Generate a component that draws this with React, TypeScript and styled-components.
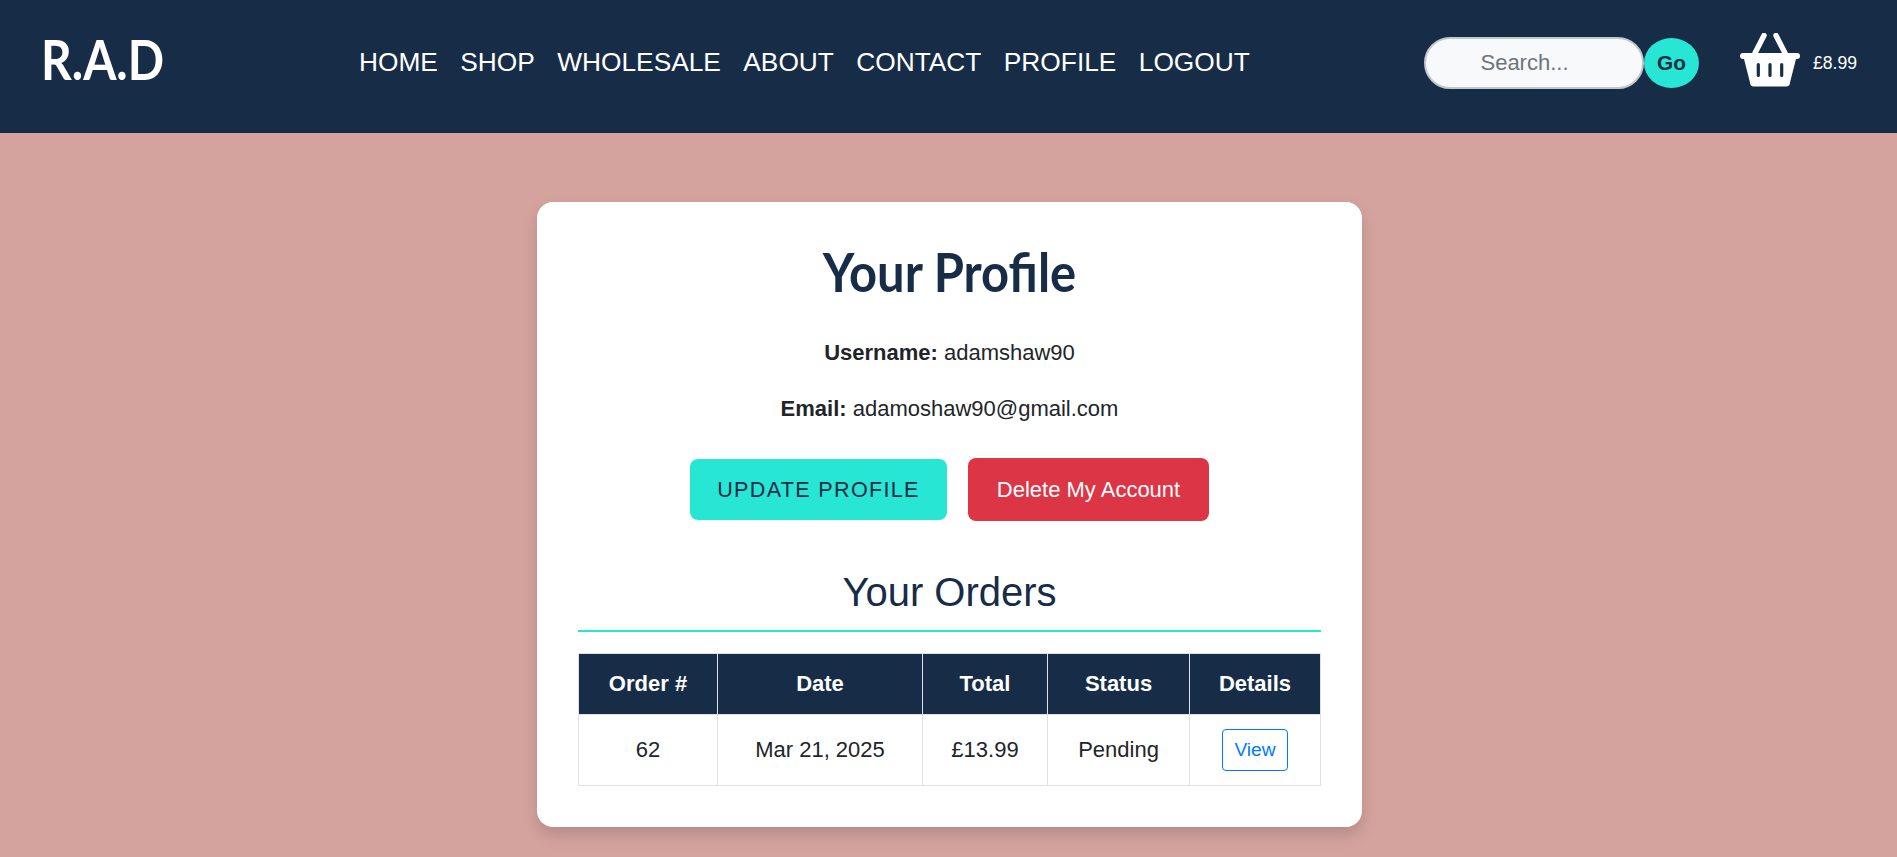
import React, { FC } from "react";
import styled, { createGlobalStyle } from "styled-components";

const navy = "#172c47";
const teal = "#27e6d4";

const GlobalStyle = createGlobalStyle`
  * {
    box-sizing: border-box;
  }

  body {
    margin: 0;
    min-height: 857px;
    background: #d5a39e;
    font-family: "Liberation Sans", Arial, sans-serif;
    color: #212529;
  }
`;

const Header = styled.header`
  display: flex;
  align-items: center;
  height: 133px;
  background: ${navy};
  padding: 0 0 0 41px;
`;

const Logo = styled.div`
  width: 318px;
  margin-top: -14px;
  color: #fff;
  font-family: Lato, sans-serif;
  font-size: 55px;
  font-weight: 700;
  line-height: 1;
  transform: scaleX(0.87);
  transform-origin: left center;
`;

const Nav = styled.nav`
  display: flex;
  gap: 22.4px;
  width: 1065px;
  margin-top: -9px;
`;

const NavLink = styled.a`
  color: #fff;
  font-size: 26.3px;
  text-decoration: none;
`;

const SearchForm = styled.form`
  display: flex;
  align-items: center;
  margin-top: -8px;
`;

const SearchInput = styled.input`
  width: 220px;
  height: 52px;
  padding: 0 34px 0 15px;
  border: 2px solid #c3c6ca;
  border-radius: 26px;
  background: #f8f9fa;
  font-family: inherit;
  font-size: 22px;
  text-align: center;

  &::placeholder {
    color: #6c757d;
    opacity: 1;
  }
`;

const GoButton = styled.button`
  width: 55px;
  height: 50px;
  padding: 0;
  border: 0;
  border-radius: 50%;
  background: ${teal};
  color: ${navy};
  font-family: inherit;
  font-size: 20.8px;
  font-weight: 700;
`;

const Cart = styled.div`
  display: flex;
  align-items: center;
  gap: 13px;
  margin-left: 41px;
  margin-top: -13px;
  color: #fff;
  font-size: 17.6px;
`;

const CartTotal = styled.span`
  margin-top: 6px;
`;

const Card = styled.main`
  width: 825px;
  margin: 69px 535px 0 537px;
  padding: 41px 41px 41px;
  border-radius: 16px;
  background: #fff;
  box-shadow: 0 8px 16px rgba(0, 0, 0, 0.15);
  text-align: center;
`;

const Title = styled.h1`
  margin: 0 0 40px;
  color: ${navy};
  font-family: Lato, sans-serif;
  font-size: 54px;
  font-weight: 700;
  line-height: 58px;
  transform: scaleX(0.905);
`;

const InfoLine = styled.p`
  margin: 0 0 33px;
  font-size: 22px;
  line-height: 23px;
`;

const Actions = styled.div`
  display: flex;
  justify-content: center;
  align-items: center;
  gap: 21px;
  margin-top: 38px;
`;

const UpdateButton = styled.button`
  width: 257px;
  height: 61px;
  border: 0;
  border-radius: 8px;
  background: ${teal};
  color: ${navy};
  font-family: inherit;
  font-size: 21.6px;
  letter-spacing: 1.3px;
`;

const DeleteButton = styled.button`
  width: 241px;
  height: 63px;
  border: 0;
  border-radius: 8px;
  background: #dc3545;
  color: #fff;
  font-family: inherit;
  font-size: 22px;
`;

const OrdersTitle = styled.h2`
  margin: 49px 0 0;
  padding-bottom: 16px;
  border-bottom: 2px solid ${teal};
  color: ${navy};
  font-size: 40px;
  font-weight: 400;
  line-height: 44px;
`;

const OrdersTable = styled.table`
  width: 742px;
  margin-top: 21px;
  border-collapse: collapse;
  table-layout: fixed;
  font-size: 22px;
`;

const HeadCell = styled.th`
  height: 61px;
  padding: 0;
  border: 1px solid #dee2e6;
  background: ${navy};
  color: #fff;
  font-weight: 700;
`;

const BodyCell = styled.td`
  height: 71px;
  padding: 0;
  border: 1px solid #dee2e6;
`;

const ViewButton = styled.a`
  display: inline-flex;
  align-items: center;
  justify-content: center;
  width: 66px;
  height: 42px;
  border: 1px solid #007bff;
  border-radius: 4px;
  color: #007bff;
  font-size: 19.2px;
  vertical-align: middle;
`;

const BasketIcon: FC = () => (
  <svg width="60" height="54" viewBox="0 0 60 54" fill="#fff">
    <path d="M24 2.5 15 20M36 2.5l9 17.5" stroke="#fff" strokeWidth="5.4" strokeLinecap="round" />
    <rect x="0" y="20" width="60" height="6" rx="3" />
    <path d="M3.5 24h53L50 49.5a4 4 0 0 1-4 4H14a4 4 0 0 1-4-4Z" />
    <path d="M18.3 31.5v11M30 31.5v11M41.7 31.5v11" stroke={navy} strokeWidth="3.2" strokeLinecap="round" />
  </svg>
);

const navItems = ["HOME", "SHOP", "WHOLESALE", "ABOUT", "CONTACT", "PROFILE", "LOGOUT"];

const columns = [
  { label: "Order #", width: 139 },
  { label: "Date", width: 205 },
  { label: "Total", width: 125 },
  { label: "Status", width: 142 },
  { label: "Details", width: 131 },
];

const App: FC = () => (
  <>
    <GlobalStyle />
    <Header>
      <Logo>R.A.D</Logo>
      <Nav>
        {navItems.map((item) => (
          <NavLink key={item}>{item}</NavLink>
        ))}
      </Nav>
      <SearchForm>
        <SearchInput placeholder="Search..." />
        <GoButton type="button">Go</GoButton>
      </SearchForm>
      <Cart>
        <BasketIcon />
        <CartTotal>£8.99</CartTotal>
      </Cart>
    </Header>
    <Card>
      <Title>Your Profile</Title>
      <InfoLine>
        <strong>Username:</strong> adamshaw90
      </InfoLine>
      <InfoLine>
        <strong>Email:</strong> adamoshaw90@gmail.com
      </InfoLine>
      <Actions>
        <UpdateButton type="button">UPDATE PROFILE</UpdateButton>
        <DeleteButton type="button">Delete My Account</DeleteButton>
      </Actions>
      <OrdersTitle>Your Orders</OrdersTitle>
      <OrdersTable>
        <colgroup>
          {columns.map((col) => (
            <col key={col.label} width={col.width} />
          ))}
        </colgroup>
        <thead>
          <tr>
            {columns.map((col) => (
              <HeadCell key={col.label}>{col.label}</HeadCell>
            ))}
          </tr>
        </thead>
        <tbody>
          <tr>
            <BodyCell>62</BodyCell>
            <BodyCell>Mar 21, 2025</BodyCell>
            <BodyCell>£13.99</BodyCell>
            <BodyCell>Pending</BodyCell>
            <BodyCell>
              <ViewButton>View</ViewButton>
            </BodyCell>
          </tr>
        </tbody>
      </OrdersTable>
    </Card>
  </>
);

export default App;
